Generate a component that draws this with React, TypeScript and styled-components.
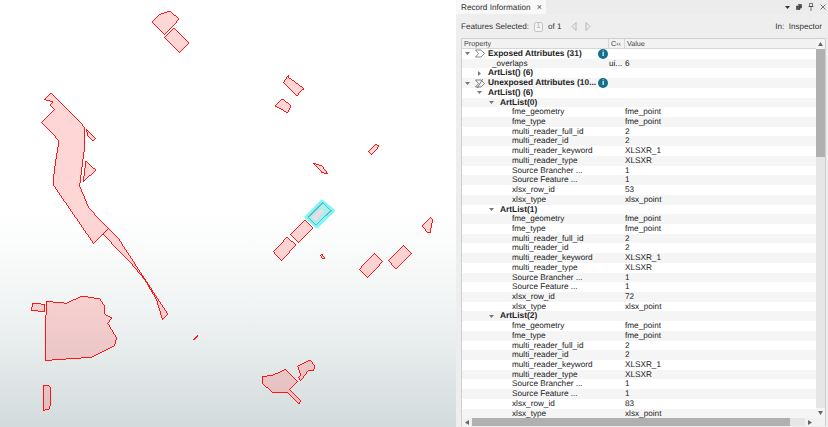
import React from 'react';
import styled, { createGlobalStyle } from 'styled-components';

const GlobalStyle = createGlobalStyle`
  html, body {
    margin: 0;
    padding: 0;
    overflow: hidden;
  }
  body {
    font-family: "Liberation Sans", Arial, sans-serif;
    text-rendering: geometricPrecision;
  }
`;

const Page = styled.div`
  display: flex;
  width: 828px;
  height: 427px;
  overflow: hidden;
  background: #eeeeee;
`;

const MapPane = styled.div`
  flex: 0 0 456px;
  height: 427px;
  background: linear-gradient(180deg, #ffffff 0%, #ffffff 50%, #f1f4f4 72%, #d3dbdc 100%);
`;

const MapSvg = styled.svg`
  display: block;
`;

const Panel = styled.div`
  flex: 1;
  display: flex;
  flex-direction: column;
  min-width: 0;
`;

const TabBar = styled.div`
  display: flex;
  align-items: stretch;
  justify-content: space-between;
  height: 14px;
  margin-bottom: 1px;
  background: #ececec;
`;

const Tab = styled.div`
  display: flex;
  align-items: center;
  gap: 6px;
  width: 90px;
  box-sizing: border-box;
  padding-left: 5px;
  background: #f8f8f8;
  color: #333;
  font-size: 8.2px;
`;

const TabClose = styled.span`
  font-size: 9px;
  color: #555;
`;

const WindowIcons = styled.div`
  display: flex;
  align-items: center;
  gap: 6px;
  padding-right: 2px;
`;

const Toolbar = styled.div`
  display: flex;
  align-items: center;
  justify-content: space-between;
  height: 23px;
  padding: 0 6px 0 5px;
  color: #333;
  font-size: 8.1px;
`;

const ToolGroup = styled.div`
  display: flex;
  align-items: center;
  gap: 3px;
`;

const PageBox = styled.span`
  display: inline-flex;
  align-items: center;
  justify-content: center;
  box-sizing: border-box;
  width: 9px;
  height: 10px;
  margin: 0 2px;
  border: 1px solid #c4c4c4;
  border-radius: 2px;
  background: #f4f4f4;
  color: #aaa;
  font-size: 7px;
`;

const PagerArrows = styled.span`
  display: inline-flex;
  gap: 8px;
  margin-left: 7px;
`;

const TreeFrame = styled.div`
  position: relative;
  flex: 1;
  margin: 0 2px 1px 5px;
  background: #fff;
  border: 1px solid #cfcfcf;
  border-bottom: 0;
  min-height: 0;
  overflow: hidden;
`;

const HeaderRow = styled.div`
  display: grid;
  grid-template-columns: 147px 16px 1fr;
  box-sizing: border-box;
  height: 10px;
  line-height: 9px;
  background: #f2f2f2;
  border-bottom: 1px solid #d6d6d6;
  color: #444;
  font-size: 7.2px;
`;

const HeaderCell = styled.div`
  padding-left: 2px;
  border-right: 1px solid #d6d6d6;
  white-space: nowrap;
  overflow: hidden;
  &:last-child {
    border-right: 0;
  }
`;

const Row = styled.div<{ $alt: boolean }>`
  display: grid;
  grid-template-columns: 147px 16px 1fr;
  height: 9.72px;
  line-height: 9.72px;
  background: ${(p) => (p.$alt ? '#f5f5f5' : '#ffffff')};
  color: #222;
  font-size: 8.2px;
  white-space: nowrap;
`;

const PropertyCell = styled.div<{ $depth: number; $bold: boolean }>`
  display: flex;
  align-items: center;
  padding-left: ${(p) => p.$depth}px;
  font-weight: ${(p) => (p.$bold ? 700 : 400)};
  font-size: ${(p) => (p.$bold ? '8.4px' : '8.2px')};
  overflow: hidden;
`;

const Twisty = styled.svg<{ $gap: number }>`
  flex: 0 0 5px;
  margin-right: ${(p) => p.$gap}px;
`;

const GroupIcon = styled.svg`
  flex: 0 0 10px;
  margin-right: 3px;
`;

const InfoBadge = styled.span`
  position: absolute;
  left: 136px;
  width: 10px;
  height: 10px;
  border-radius: 50%;
  background: #12708c;
  color: #fff;
  font-size: 7.5px;
  font-weight: 700;
  line-height: 10px;
  text-align: center;
`;

const VScroll = styled.div`
  position: absolute;
  top: 0;
  right: 0;
  bottom: 8px;
  width: 9px;
  display: flex;
  flex-direction: column;
  background: #f0f0f0;
`;

const ScrollEnd = styled.div`
  flex: 0 0 10px;
  display: flex;
  align-items: center;
  justify-content: center;
  background: #f4f4f4;
`;

const VThumb = styled.div`
  flex: 0 0 108px;
  background: #b0b0b0;
`;

const VTrack = styled.div`
  flex: 1;
  background: #e6e6e6;
`;

const HScroll = styled.div`
  position: absolute;
  left: 0;
  right: 0;
  bottom: 0;
  height: 8px;
  display: flex;
  background: #e6e6e6;
`;

const HEnd = styled.div`
  flex: 0 0 10px;
  display: flex;
  align-items: center;
  justify-content: center;
  background: #f2f2f2;
`;

const HThumb = styled.div`
  flex: 0 0 318px;
  background: #b0b0b0;
`;

const HTrack = styled.div`
  flex: 1;
`;

const FILL = 'rgba(255, 120, 120, 0.3)';

const shapes: string[] = [
  '51,93.3 81,122.7 84.7,128.3 84.7,146.7 82,166.7 79.7,186 89,208.3 108.3,228.3 93.7,243.7 53.3,185 54.3,170 59,140.7 41.7,122.3 54.3,109.3 50,105 52.7,101.7 44.3,99.7',
  '108.3,228.3 118.3,238.3 140,271.7 167.7,314 162.3,319.3 156.7,300 145,280 128.3,260 115,246.7 103.3,234.3',
  '86.7,129.3 95.7,138.3 92.7,140.7 87.3,135',
  '86,161.3 95.7,170 83.3,182 85,168.3',
  '46.3,301.3 66.7,303.3 81.7,296 100,299 104,305 105,314.3 111.7,318 107.7,323.3 116.7,338.3 114.3,345.7 91,357.3 51.7,360 45.3,360.3 45.7,330',
  '32.3,303.7 34,303.5 44.7,304.3 44.7,311.3 31.7,310.7',
  '43.3,385.3 48.7,385.3 50.7,388.3 50.7,405 48.7,409.3 43.3,410.3',
  '193.3,339.3 197.3,335.3 197.8,336.3 194.3,339.8',
  '262.3,376.7 273.3,375 285.7,369.3 297.3,381.7 289.3,389.3 300.7,401 299,403.7 287.7,392.3 272.3,392.3 262.3,383.3',
  '297.7,366 310,360 315,366 313.3,370.7 308.3,370.7 300.7,380.7 298.3,377.3 300.7,375',
  '152.3,22 159.3,14.7 169.3,11 179.3,19 164.7,34.7',
  '174.3,28 189,42.7 179.3,52.7 164.3,37.7',
  '288.3,75.3 289,77.7 304,88.7 301,90.7 297,96 283.3,82.7',
  '275,106 282.3,99 291,105.7 287.7,112.7',
  '368.3,151.7 375.7,144.3 379.3,146 371.7,154.7',
  '313.3,163.3 322,166 328,174 322,172.5',
  '304.7,220 312.7,228 298.7,242.7 290.3,234.3',
  '287.3,237 295.7,245 281.7,260.7 273.3,251.7',
  '320,255.3 322,254.3 325,258.3 323.3,259',
  '374.7,253.3 382.7,261.7 367.3,277.7 359.3,269.3',
  '403.7,245.3 411.7,253.3 396,268.7 388.3,260.7',
  '430.7,217.3 432.7,220 430,232.7 427.7,232.7 422.3,226',
];

type RowData = {
  label: string;
  value?: string;
  type?: string;
  depth: number;
  bold?: boolean;
  twisty?: 'open' | 'closed';
  icon?: 'exposed' | 'unexposed';
};

const artItems = (rowId: string): RowData[] => [
  { label: 'fme_geometry', value: 'fme_point', depth: 50 },
  { label: 'fme_type', value: 'fme_point', depth: 50 },
  { label: 'multi_reader_full_id', value: '2', depth: 50 },
  { label: 'multi_reader_id', value: '2', depth: 50 },
  { label: 'multi_reader_keyword', value: 'XLSXR_1', depth: 50 },
  { label: 'multi_reader_type', value: 'XLSXR', depth: 50 },
  { label: 'Source Brancher ...', value: '1', depth: 50 },
  { label: 'Source Feature ...', value: '1', depth: 50 },
  { label: 'xlsx_row_id', value: rowId, depth: 50 },
  { label: 'xlsx_type', value: 'xlsx_point', depth: 50 },
];

const rows: RowData[] = [
  { label: 'Exposed Attributes (31)', depth: 3, bold: true, twisty: 'open', icon: 'exposed' },
  { label: '_overlaps', type: 'ui...', value: '6', depth: 30 },
  { label: 'ArtList() (6)', depth: 15, bold: true, twisty: 'closed' },
  { label: 'Unexposed Attributes (10...', depth: 3, bold: true, twisty: 'open', icon: 'unexposed' },
  { label: 'ArtList() (6)', depth: 15, bold: true, twisty: 'open' },
  { label: 'ArtList(0)', depth: 27, bold: true, twisty: 'open' },
  ...artItems('53'),
  { label: 'ArtList(1)', depth: 27, bold: true, twisty: 'open' },
  ...artItems('72'),
  { label: 'ArtList(2)', depth: 27, bold: true, twisty: 'open' },
  ...artItems('83'),
];

const TwistyIcon = ({ kind, gap }: { kind: 'open' | 'closed'; gap: number }) => (
  <Twisty $gap={gap} width="5" height="5" viewBox="0 0 5 5">
    {kind === 'open' ? <path d="M0 1h5L2.5 4z" fill="#777" /> : <path d="M1 0l3 2.5L1 5z" fill="#777" />}
  </Twisty>
);

const SigmaIcon = ({ crossed }: { crossed: boolean }) => (
  <GroupIcon width="10" height="9" viewBox="0 0 10 9">
    <path d="M.5 1H6l3.5 3.5L6 8H.5l3-3.5z" fill="none" stroke="#555" strokeWidth="0.7" />
    {crossed && <path d="M2 9.5L8 -.5" stroke="#555" strokeWidth="0.7" />}
  </GroupIcon>
);

const App: React.FC = () => {
  return (
    <Page>
      <GlobalStyle />
      <MapPane>
        <MapSvg width="456" height="427" viewBox="0 0 456 427">
          {shapes.map((points, i) => (
            <polygon key={i} points={points} fill={FILL} stroke="#ff0000" strokeWidth="0.9" shapeRendering="crispEdges" />
          ))}
          <polygon
            points="322,201 333.5,210.7 316.7,227 306,217.3"
            fill="#7df6f9"
            stroke="#7df6f9"
            strokeWidth="3"
            strokeLinejoin="round"
          />
          <polygon points="322.7,203 331,210.7 316,224.7 308.3,217.3" fill="#a6f0f0" stroke="#6fb5b5" strokeWidth="1" shapeRendering="crispEdges" />
          <polygon points="311.7,217.3 321.7,209 324.3,211.5 315,220.7" fill="#f8d8de" />
        </MapSvg>
      </MapPane>
      <Panel>
        <TabBar>
          <Tab>
            Record Information
            <TabClose>×</TabClose>
          </Tab>
          <WindowIcons>
            <svg width="5" height="5" viewBox="0 0 5 5"><path d="M0 1h5L2.5 4z" fill="#333" /></svg>
            <svg width="6" height="6" viewBox="0 0 6 6"><path d="M2 .5h3.5V4H4.5M.5 2H4v3.5H.5z" fill="#555" stroke="#333" strokeWidth="0.6" /></svg>
            <svg width="6" height="8" viewBox="0 0 6 8"><path d="M1.5 .5h3v3h-3zM.5 3.5h5M3 3.5V8" fill="none" stroke="#444" strokeWidth="0.7" /></svg>
            <svg width="6" height="6" viewBox="0 0 6 6"><path d="M.5 .5l5 5M5.5 .5l-5 5" stroke="#444" strokeWidth="0.7" /></svg>
          </WindowIcons>
        </TabBar>
        <Toolbar>
          <ToolGroup>
            Features Selected:
            <PageBox>1</PageBox>
            of 1
            <PagerArrows>
              <svg width="6" height="9" viewBox="0 0 6 9"><path d="M5 .5L1 4.5l4 4z" fill="none" stroke="#aaa" strokeWidth="0.8" /></svg>
              <svg width="6" height="9" viewBox="0 0 6 9"><path d="M1 .5l4 4-4 4z" fill="none" stroke="#aaa" strokeWidth="0.8" /></svg>
            </PagerArrows>
          </ToolGroup>
          <span>In:&nbsp; Inspector</span>
        </Toolbar>
        <TreeFrame>
          <HeaderRow>
            <HeaderCell>Property</HeaderCell>
            <HeaderCell>C‹‹</HeaderCell>
            <HeaderCell>Value</HeaderCell>
          </HeaderRow>
          {rows.map((row, i) => (
            <Row key={i} $alt={i % 2 === 1}>
              <PropertyCell $depth={row.depth} $bold={!!row.bold}>
                {row.twisty && <TwistyIcon kind={row.twisty} gap={row.icon ? 5 : 6} />}
                {row.icon && <SigmaIcon crossed={row.icon === 'unexposed'} />}
                {row.label}
              </PropertyCell>
              <div>{row.type}{row.icon && <InfoBadge>i</InfoBadge>}</div>
              <div>{row.value}</div>
            </Row>
          ))}
          <VScroll>
            <ScrollEnd><svg width="5" height="4" viewBox="0 0 5 4"><path d="M2.5 0L5 4H0z" fill="#666" /></svg></ScrollEnd>
            <VThumb />
            <VTrack />
            <ScrollEnd><svg width="5" height="4" viewBox="0 0 5 4"><path d="M0 0h5L2.5 4z" fill="#666" /></svg></ScrollEnd>
          </VScroll>
          <HScroll>
            <HEnd><svg width="4" height="5" viewBox="0 0 4 5"><path d="M4 0v5L0 2.5z" fill="#666" /></svg></HEnd>
            <HThumb />
            <HTrack />
            <HEnd><svg width="4" height="5" viewBox="0 0 4 5"><path d="M0 0v5l4-2.5z" fill="#666" /></svg></HEnd>
            <HEnd />
          </HScroll>
        </TreeFrame>
      </Panel>
    </Page>
  );
};

export default App;
